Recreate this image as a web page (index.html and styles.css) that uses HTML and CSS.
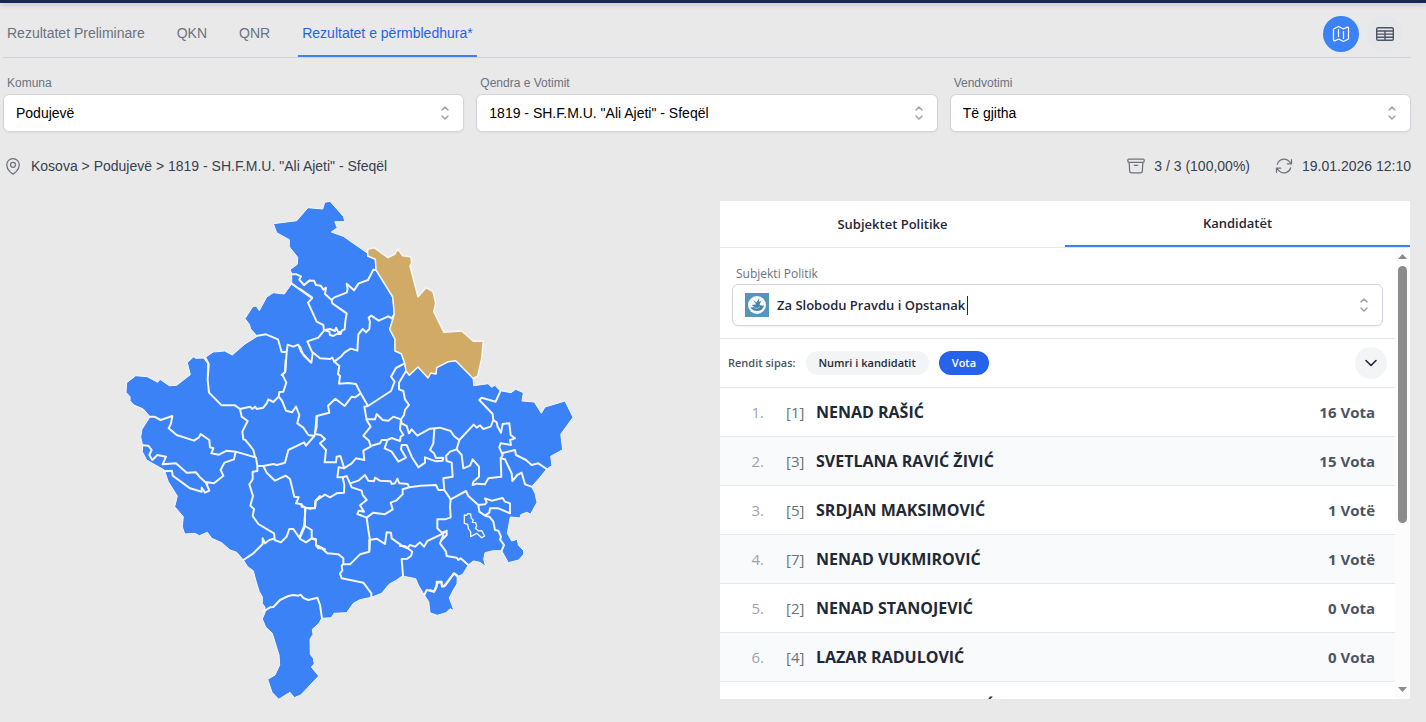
FILE: index.html
```html
<!DOCTYPE html>
<html lang="sq">
<head>
<meta charset="utf-8">
<meta name="viewport" content="width=device-width, initial-scale=1">
<title>Rezultatet e përmbledhura</title>
<link rel="stylesheet" href="styles.css">
</head>
<body>
<div class="topbar"></div>
<main class="page">
  <header class="main-nav">
    <nav class="tabs">
      <a class="tab" href="#">Rezultatet Preliminare</a>
      <a class="tab" href="#">QKN</a>
      <a class="tab" href="#">QNR</a>
      <a class="tab tab-active" href="#">Rezultatet e përmbledhura*</a>
    </nav>
    <div class="views">
      <button class="view view-active" type="button" aria-label="Harta">
        <svg width="20" height="20" viewBox="0 0 24 24" fill="none" stroke="currentColor" stroke-width="1.5" stroke-linecap="round" stroke-linejoin="round"><path d="M9 6.75V15m6-6v8.25m.503 3.498 4.875-2.437c.381-.19.622-.58.622-1.006V4.82c0-.836-.88-1.38-1.628-1.006l-3.869 1.934c-.317.159-.69.159-1.006 0L9.503 3.252a1.125 1.125 0 0 0-1.006 0L3.622 5.689C3.24 5.88 3 6.27 3 6.695V19.18c0 .836.88 1.38 1.628 1.006l3.869-1.934c.317-.159.69-.159 1.006 0l4.994 2.497c.317.158.69.158 1.006 0Z"/></svg>
      </button>
      <button class="view" type="button" aria-label="Tabela">
        <svg width="20" height="20" viewBox="0 0 20 20" fill="none" stroke="currentColor" stroke-width="1.4"><rect x="1.7" y="3.7" width="16.6" height="12.6" rx="1.3"/><path d="M1.7 7h16.6M1.7 10.1h16.6M1.7 13.2h16.6M10 7v9.3"/></svg>
      </button>
    </div>
  </header>

  <form class="filters">
    <div class="field">
      <label for="komuna">Komuna</label>
      <div class="select-box"><select id="komuna"><option>Podujevë</option></select>
      <svg class="updown" width="20" height="20" viewBox="0 0 20 20"><path d="m7 7 3-3 3 3m0 6-3 3-3-3"/></svg></div>
    </div>
    <div class="field">
      <label for="qendra">Qendra e Votimit</label>
      <div class="select-box"><select id="qendra"><option>1819 - SH.F.M.U. "Ali Ajeti" - Sfeqël</option></select>
      <svg class="updown" width="20" height="20" viewBox="0 0 20 20"><path d="m7 7 3-3 3 3m0 6-3 3-3-3"/></svg></div>
    </div>
    <div class="field">
      <label for="vend">Vendvotimi</label>
      <div class="select-box"><select id="vend"><option>Të gjitha</option></select>
      <svg class="updown" width="20" height="20" viewBox="0 0 20 20"><path d="m7 7 3-3 3 3m0 6-3 3-3-3"/></svg></div>
    </div>
  </form>

  <div class="status">
    <div class="status-item">
      <svg class="icon" width="20" height="20" viewBox="0 0 24 24"><path d="M15 10.5a3 3 0 1 1-6 0 3 3 0 0 1 6 0Z"/><path d="M19.5 10.5c0 7.142-7.5 11.25-7.5 11.25S4.500 17.642 4.500 10.500a7.500 7.500 0 1 1 15 0Z"/></svg>
      <span>Kosova &gt; Podujevë &gt; 1819 - SH.F.M.U. "Ali Ajeti" - Sfeqël</span>
    </div>
    <div class="status-right">
      <div class="status-item">
        <svg class="icon" width="20" height="20" viewBox="0 0 24 24"><path d="m20.250 7.500-.625 10.632a2.250 2.250 0 0 1-2.247 2.118H6.622a2.250 2.250 0 0 1-2.247-2.118L3.750 7.500M10 11.250h4M3.375 7.500h17.250c.621 0 1.125-.504 1.125-1.125v-1.500c0-.621-.504-1.125-1.125-1.125H3.375c-.621 0-1.125.504-1.125 1.125v1.500c0 .621.504 1.125 1.125 1.125Z"/></svg>
        <span>3 / 3 (100,00%)</span>
      </div>
      <div class="status-item">
        <svg class="icon" width="20" height="20" viewBox="0 0 24 24"><path d="M16.023 9.348h4.992v-.001M2.985 19.644v-4.992m0 0h4.992m-4.993 0 3.181 3.183a8.250 8.250 0 0 0 13.803-3.700M4.031 9.865a8.250 8.250 0 0 1 13.803-3.700l3.181 3.182m0-4.991v4.990"/></svg>
        <span>19.01.2026 12:10</span>
      </div>
    </div>
  </div>

  <div class="content">
    <section class="map-area">
      <svg class="map" viewBox="118 201 460 499" role="img" aria-label="Harta e komunave">
        <path class="land" d="M273.300 223.700 296.700 220.700 308 207.700 322.700 209 324.700 202.300 330 201.300 343.300 216.300 345 221.700 334.700 221.700 337.300 227.700 331.300 232 343.300 236.300 367.700 253.300 367.700 256 375.300 259.300 376 270 392.700 297 394.300 314.300 389.700 329.300 395 339.300 395 351 401.300 353.700 404.700 363.300 406 371 409.300 375.300 418 367 428 378 430.700 373 436 374 436.700 367.700 448.300 361.700 455.700 360.700 473 378.300 473.700 385.700 488 383.700 491.700 387.300 495 385.300 500 390.700 511 392.700 515.700 389.300 523.300 392.700 522 401 534.300 402 541.300 413.300 545 407 565 401 573 417.300 560.700 434.300 562.700 449.700 550.700 456.300 552 465.700 546.700 469 540 477.300 531.700 486.700 535 493.300 537 502.300 530.700 514 526.700 512.300 520.700 514.700 520 518 510.300 517 507.300 533.300 511.700 541 517.300 539.300 518.300 545 523.700 550.700 523.700 554.300 518.700 560 508.300 562.700 501.700 550.700 493.300 550.700 485 552.700 483.700 559.300 485.700 566.700 480 562.300 473.300 561 468.300 565 462.700 574.300 457.300 576.700 457 584 453.300 590 449.300 597.700 454 610.700 450 608.700 446 612.700 437.300 615.300 430 612.800 428.700 601.700 424.300 595 418.300 585 415.700 578.700 402.300 576 396.700 580 389 584.300 381.700 593.300 371.300 597.300 360 599.700 353.300 603.300 346.700 612.700 334 613.300 331.300 617.700 321.700 618.300 319 623.300 312.300 629.300 313 634.300 310 639.300 310.300 654.300 313.300 658.300 314.300 664 311.300 667 318.700 676 306.700 688.700 300.700 695 294.300 697.700 290 692.300 278.700 699.300 272 692.300 267.700 679.300 275 675 279.700 665 279 655 272.300 633.300 265.700 627 262.300 619 265 612.700 265 607.300 262.300 603.300 262.300 596.700 259.300 591.700 255.700 580 253.300 570.700 247.700 566.700 243.300 560 236.700 552.300 230 550 221.700 542.700 211.700 538.300 207.300 532.300 199.300 535.700 195 533.300 184.700 534 182.300 526.700 183.300 516.700 174.700 506.700 177.300 496 168.300 481.700 164.300 470 146.700 460 142.300 451.700 142.700 446 140.700 436.700 142 429.300 150 416.700 143.300 409 134 405 130 400.700 130 396.700 126 392.300 126.700 382.700 135.700 375.700 147.300 376.700 157.700 382.300 160 379.300 169.300 385.700 176.700 385.300 190.300 374.700 187.300 362.700 193.300 357 196 358.300 204.300 358 213.300 352 224.700 351 232.300 355 245 344 257.300 336.300 250.700 329 249.300 324.300 245 318.700 252.700 306.700 256.300 306 259.300 310.700 266.700 297 273.300 292.700 284.300 294 291.700 283.700 291.700 273.300 290 269.700 297.300 264.300 297.700 257.300 289.300 246.700 289.300 239.700 276.700 232.700Z"/>
        <g class="borders" transform="translate(120 195) scale(.33333)">
          <path d="M515 238 530 238 543 244 538 254 552 270 570 256M515 266 570 305M412 422 438 418 474 433 485 471 500 471 496 530 485 540M500 471 503 449 520 455 535 449 543 470 570 500M253 489 266 507 264 540"/>
        </g>
        <g class="borders" transform="translate(300 195) scale(.33333)">
          <path d="M12 270 28 257 42 257 48 270 62 272 70 284 78 278 75 297 95 315 97 325 140 355 136 380 134 403 126 406 122 417 112 416 100 423 90 420 88 410 72 405M75 405 90 402 105 408 108 398 114 410 124 412M95 315 103 307 140 293 143 282 140 266 162 286 176 265 204 255 220 224 228 225M25 300 36 310 24 323 50 380 70 390 72 407 55 428 22 439 38 475 34 503 10 480 0 455M0 282 36 307M38 472 60 490 90 492 97 488 103 500 125 483 133 473 152 461 172 467 175 418 188 402 198 412 208 402 210 380 206 368 214 362 236 377 265 364 275 370 283 358"/>
        </g>
        <g class="borders" transform="translate(120 360) scale(.33333)">
          <path d="M257 -5 265 10 263 60 267 98 305 136 345 136 360 147 390 140 397 147 405 140 410 147 430 143 440 130 445 118 460 126 476 110 478 96 490 95 499 68 487 44 495 37 497 0M476 110 486 122 498 152 516 157 528 140 538 165 532 190 550 203 565 225 583 228 590 200 590 168M360 147 365 170 383 183 367 215 370 238 376 240 390 257 400 270 405 290M90 170 103 170 122 180 157 168 153 190 146 205 170 225 222 242 237 232 242 222 268 240 270 262 280 265 274 280 297 284 320 272 347 275 408 293 412 318 430 318 460 312 470 315 495 308 505 270 552 247 558 257 583 228M347 275 342 298 313 308 302 330 310 347 282 370 257 366 268 392 255 398 245 383 245 395 210 385 158 347 156 332 133 334M68 256 85 257 95 270 88 285 97 300 112 285 138 290 128 313 168 310 200 338 228 337 240 352 262 372M412 318 412 333 398 335 398 358 388 373 399 408 391 437 402 447 398 468 415 492 462 520 464 535 448 540 435 550 428 535 428 552 400 580 370 600M464 540 483 547 500 530 508 507 520 507 538 533 552 498 557 443M430 318 440 338 465 362 497 347 510 357 523 410 536 412 528 430 545 433 545 440 570 446 585 443 586 423 600 408"/>
        </g>
        <g class="borders" transform="translate(300 360) scale(.33333)">
          <path d="M103 5 118 18 114 42 120 48 117 71 145 69 168 72 182 100 204 138 273 93 284 65 273 50 288 24 314 10M318 33 297 68 297 88 310 93 315 118 327 135 315 150 312 165 303 178M182 100 165 112 155 110 134 138 106 116 84 137 88 158 50 168 45 222 62 225 75 237 60 250 78 270 74 307 108 307 110 290 121 288 132 322M204 138 193 140 200 180 212 200 190 227 207 242 212 260 190 272 193 300 168 295 155 310 132 325 116 322 112 352 128 352 133 375 132 398 110 400 90 412 75 404 48 422 45 445 15 443 0 432M200 178 225 178 230 162 248 180 265 182 280 170 303 178M212 258 240 250 245 240 262 240 275 234 300 243 302 230 310 225 300 208 303 178 305 190 320 198 327 220 335 208 352 227 390 206 420 203 452 213 462 228 477 240M262 240 254 265 275 275 295 305 318 293 303 268 305 255 320 255 335 290 355 322 375 308 375 292 408 304 428 302 430 293 408 294 402 280 390 270 400 250 403 208M470 268 450 275 438 288 440 303 455 308 458 350 430 355 433 390 452 418M128 352 140 348 150 370 175 362 195 345 205 362 222 364 225 353 240 362 272 364 275 372 285 370 292 356 298 370 323 372 328 382 362 377 408 375 415 390 433 390M150 370 155 382 185 392 188 405 200 420 180 436 192 455 176 452 172 462 200 473 220 458 254 463 278 448 272 428 288 422 308 403 308 388 328 382M200 473 205 510 210 540 208 570M208 540 230 536 255 552 260 517 273 518 275 535 310 560 322 565 330 555 345 560 360 547 372 560 382 543 430 520 440 512M452 418 450 440 452 472 435 478 412 478 412 505 425 518 440 513 440 525 425 540M15 443 15 498 0 533M15 498 35 510 35 535 18 547 0 537M35 535 48 538 48 555 75 568"/>
        </g>
        <g class="borders" transform="translate(430 360) scale(.33333)">
          <path d="M80 268 88 240 131 194 140 203 150 196 160 207 182 200 190 180 188 162 148 120 155 113 197 125 212 92M190 180 200 187 203 200 213 218 218 192 238 190 242 225 255 235 240 240 243 255 212 250 208 262 218 285 212 295M215 280 255 270 258 285 288 300 305 315 325 310 350 327M212 295 225 298 245 340 247 363 262 345 275 338 285 373 305 380M212 295 214 350 175 355 165 373 140 371 128 375 130 365 147 350 147 320 128 298 120 317 100 325 95 285 80 268M62 418 108 393 115 408 145 435 148 455 165 467 178 470 190 485 195 510 205 512 213 530 210 538 222 555 215 572M145 435 165 433 170 427 165 415 185 422 218 414 225 425 240 430 240 460 205 445 180 445 178 458 165 467M40 525 30 550 48 575 50 588 80 593 85 600 92 595 115 615M0 690 12 695 20 680 20 665 35 665 36 680 45 678 72 640 82 650"/>
          <path class="enclave" d="M103 465 110 466 113 461 122 462 124 475 130 480 127 487 137 488 140 498 136 505 146 513 155 512 164 528 155 533 140 520 122 530 122 516 115 505 113 493 103 490Z"/>
        </g>
        <g class="borders" transform="translate(230 530) scale(.33333)">
          <path d="M100 245 120 232 130 231 150 210 175 198 190 195 205 197 212 194 220 204 235 210 262 203 270 225 276 265M245 25 258 30 258 46 265 55 275 55 292 70 325 73 340 85 340 102 335 107 337 122 330 130 335 145 400 158 424 190 424 202M340 102 360 103 390 73 418 65 418 30M510 48 525 48 547 65 543 78 532 86 515 87 519 138M583 195 590 180 612 185 622 160 633 155 636 168 642 168 672 130 682 137"/>
        </g>
        <path class="selected" d="M367.700 249.300 374 247.700 388 257.700 395 254 397.700 249 402.700 255.700 410.700 256.700 411.700 262.700 410 266 418 296.700 426 287.700 433 291.700 435.700 303 433.700 311.700 444 332.300 461.700 331 473.300 341.300 483.300 341 481.700 358.300 477.700 376 473 378.300 455.700 360.700 448.300 361.700 436.700 367.700 436 374 430.700 373 428 378 418 367 409.300 375.300 406 371 404.700 363.300 401.300 353.700 395 351 395 339.300 389.700 329.300 394.300 314.300 392.700 297 376 270 375.300 259.300 367.700 256Z"/>
      </svg>
    </section>

    <section class="panel">
      <div class="panel-tabs">
        <button class="panel-tab" type="button">Subjektet Politike</button>
        <button class="panel-tab panel-tab-active" type="button">Kandidatët</button>
      </div>
      <div class="panel-body">
        <div class="panel-scroll">
          <div class="party">
            <label for="subjekti">Subjekti Politik</label>
            <div class="party-box">
              <svg width="24" height="24" viewBox="0 0 24 24"><path fill="#5794bb" d="M0 0h24v24H0z"/><circle cx="12" cy="12" r="9" fill="#f5f9fc"/><path fill="#4784a9" d="M11 11 8.200 7.200l3.300 2.300L14.200 5l-.4 4 2.500-1.500-1.800 4c1.500 1.500 3.200 1.600 4.300.8 0 3-2.800 5.700-6.300 5.700-3.500 0-6-1.600-7-4 1.500.5 2.800.3 3.800-.3l-2.500-1.500c1.500-.6 3-.5 4.200-.7Z"/><path fill="none" stroke="#c4dce9" stroke-width=".8" d="M9 14.500c2 1.500 4.500 1 6-1"/></svg>
              <input id="subjekti" class="party-input" type="text" value="Za Slobodu Pravdu i Opstanak"><span class="caret"></span>
              <svg class="updown" width="20" height="20" viewBox="0 0 20 20"><path d="m7 7 3-3 3 3m0 6-3 3-3-3"/></svg>
            </div>
          </div>
          <div class="sort">
            <span class="sort-label">Rendit sipas:</span>
            <button class="pill" type="button">Numri i kandidatit</button>
            <button class="pill pill-active" type="button">Vota</button>
            <button class="expand" type="button" aria-label="Zgjero"><svg width="16" height="16" viewBox="0 0 16 16" fill="none" stroke="currentColor" stroke-width="1.600" stroke-linecap="round" stroke-linejoin="round"><path d="m3 5.500 5 5 5-5"/></svg></button>
          </div>
          <table class="candidates">
            <tbody>
            <tr><td class="rank">1.</td><td class="number">[1]</td><td class="name">NENAD RAŠIĆ</td><td class="votes">16 Vota</td></tr>
            <tr><td class="rank">2.</td><td class="number">[3]</td><td class="name">SVETLANA RAVIĆ ŽIVIĆ</td><td class="votes">15 Vota</td></tr>
            <tr><td class="rank">3.</td><td class="number">[5]</td><td class="name">SRDJAN MAKSIMOVIĆ</td><td class="votes">1 Votë</td></tr>
            <tr><td class="rank">4.</td><td class="number">[7]</td><td class="name">NENAD VUKMIROVIĆ</td><td class="votes">1 Votë</td></tr>
            <tr><td class="rank">5.</td><td class="number">[2]</td><td class="name">NENAD STANOJEVIĆ</td><td class="votes">0 Vota</td></tr>
            <tr><td class="rank">6.</td><td class="number">[4]</td><td class="name">LAZAR RADULOVIĆ</td><td class="votes">0 Vota</td></tr>
            <tr><td class="rank">7.</td><td class="number">[6]</td><td class="name">BRANISLAVA JEVTOVIĆ</td><td class="votes">0 Vota</td></tr>
            </tbody>
          </table>
        </div>
        <div class="scrollbar">
          <svg width="9" height="5" viewBox="0 0 9 5"><path fill="#8b8b8b" d="M4.500 0 9 5H0z"/></svg>
          <div class="track"><div class="thumb"></div></div>
          <svg width="9" height="5" viewBox="0 0 9 5"><path fill="#8b8b8b" d="M4.500 5 0 0h9z"/></svg>
        </div>
      </div>
    </section>
  </div>
</main>
</body>
</html>
```
FILE: styles.css
```css
* { box-sizing: border-box; }
body { margin: 0; background: #e9e9e9; color: #374151; font: 14px/20px "Liberation Sans", Arial, sans-serif; }
button, input, select { font: inherit; color: inherit; }
button { border: 0; padding: 0; cursor: pointer; }
.topbar { height: 3px; background: #1a2555; box-shadow: 0 2px 5px rgba(0, 0, 0, .2); }
.page { padding: 0 15px 0 3px; }

.main-nav { display: flex; justify-content: space-between; align-items: center; height: 55px; border-bottom: 1px solid #d1d5db; }
.tabs { display: flex; gap: 24px; height: 100%; }
.tab { display: flex; align-items: center; padding: 8px 4px 0; border-bottom: 2px solid transparent; color: #6b7280; text-decoration: none; height: 54px; }
.tab-active { color: #2563eb; border-color: #3b82f6; }
.views { display: flex; gap: 8px; padding: 8px 8px 0 0; }
.view { display: grid; place-items: center; width: 36px; height: 36px; border-radius: 50%; background: #e5e7eb; color: #4b5563; }
.view-active { background: #3b82f6; color: #fff; }

.filters { display: grid; grid-template-columns: repeat(3, 1fr); gap: 12px; padding-top: 17px; }
.field label, .party label { display: block; margin: 0 0 3px 4px; font-size: 12px; line-height: 16px; color: #6b7280; }
.select-box { position: relative; }
.select-box select { display: block; width: 100%; height: 38px; padding: 0 40px 0 12px; border: 1px solid #d1d5db; border-radius: 6px; background: #fff; color: #000; appearance: none; box-shadow: 0 1px 2px rgba(0, 0, 0, .05); }
.updown { fill: none; stroke: #9ca3af; stroke-width: 1.5; stroke-linecap: round; stroke-linejoin: round; }
.select-box .updown { position: absolute; right: 9px; top: 9px; pointer-events: none; }

.status { display: flex; justify-content: space-between; margin: 24px 0 25px; color: #374151; }
.status-right { display: flex; gap: 24px; }
.status-item { display: flex; align-items: center; gap: 8px; }
.icon { fill: none; stroke: #6b7280; stroke-width: 1.5; stroke-linecap: round; stroke-linejoin: round; }

.content { display: grid; grid-template-columns: 1fr 1fr; gap: 27px; padding-right: 1px; }
.map-area { display: flex; justify-content: center; align-items: flex-start; }
.map { display: block; width: 100%; max-width: 460px; height: auto; }
.land { fill: #3b82f6; stroke: #f3f6fb; stroke-width: 1; stroke-linejoin: round; }
.borders { fill: none; stroke: #f4f6fa; stroke-width: 6; stroke-linejoin: round; stroke-linecap: round; }
.enclave { stroke-width: 4; }
.selected { fill: #d1ab66; stroke: #f4f6fa; stroke-width: 1.5; stroke-linejoin: round; }

.panel { display: flex; flex-direction: column; height: 498px; background: #fff; color: #1f2937; font-family: "Open Sans", "Noto Sans", sans-serif; }
.panel-tabs { display: flex; border-bottom: 1px solid #e5e7eb; }
.panel-tab { flex: 1; height: 46px; background: none; font-size: 13px; font-weight: 600; }
.panel-tab-active { border-bottom: 2px solid #3b82f6; }
.panel-body { display: flex; flex: 1; min-height: 0; }
.panel-scroll { flex: 1; overflow-y: auto; scrollbar-width: none; }
.party { padding: 18px 12px 12px; border-bottom: 1px solid #e5e7eb; }
.party label { margin-bottom: 2px; }
.party-box { display: flex; align-items: center; height: 42px; padding: 0 8px 0 12px; border: 1px solid #d1d5db; border-radius: 6px; box-shadow: 0 1px 2px rgba(0, 0, 0, .05); }
.party-box .updown { margin-left: auto; }
.party-input { field-sizing: content; margin-left: 8px; padding: 0 2px 0 0; border: 0; outline: 0; font-size: 13px; font-weight: 600; }
.caret { width: 1px; height: 19px; background: #1f2937; }
.sort { display: flex; align-items: center; height: 49px; padding: 0 8px; border-bottom: 1px solid #e5e7eb; font-size: 11px; font-weight: 600; }
.sort-label { margin-right: 10px; color: #4b5563; }
.pill { height: 24px; margin-right: 10px; padding: 0 13px; border-radius: 12px; background: #f3f4f6; }
.pill-active { background: #2563eb; color: #fff; }
.expand { display: grid; place-items: center; width: 32px; height: 32px; margin-left: auto; border-radius: 50%; background: #f3f4f6; }
.candidates { width: 100%; border-collapse: separate; border-spacing: 0; font-size: 15px; }
.candidates td { height: 49px; padding: 0; border-bottom: 1px solid #e5e7eb; }
.candidates tr:nth-child(even) td { background: #f9fafb; }
.candidates .rank { width: 44px; color: #9ca3af; text-align: right; }
.candidates .number { width: 52px; padding-left: 22px; color: #6b7280; }
.candidates .name { font-size: 16px; font-weight: 700; }
.candidates .votes { padding-right: 20px; color: #4b5563; font-weight: 700; text-align: right; }
.scrollbar { display: flex; flex-direction: column; align-items: center; width: 15px; padding: 6px 0 7px; background: #fcfcfc; }
.track { flex: 1; width: 9px; padding: 7px 0; }
.thumb { height: 62%; border-radius: 5px; background: #8b8b8b; }
```
